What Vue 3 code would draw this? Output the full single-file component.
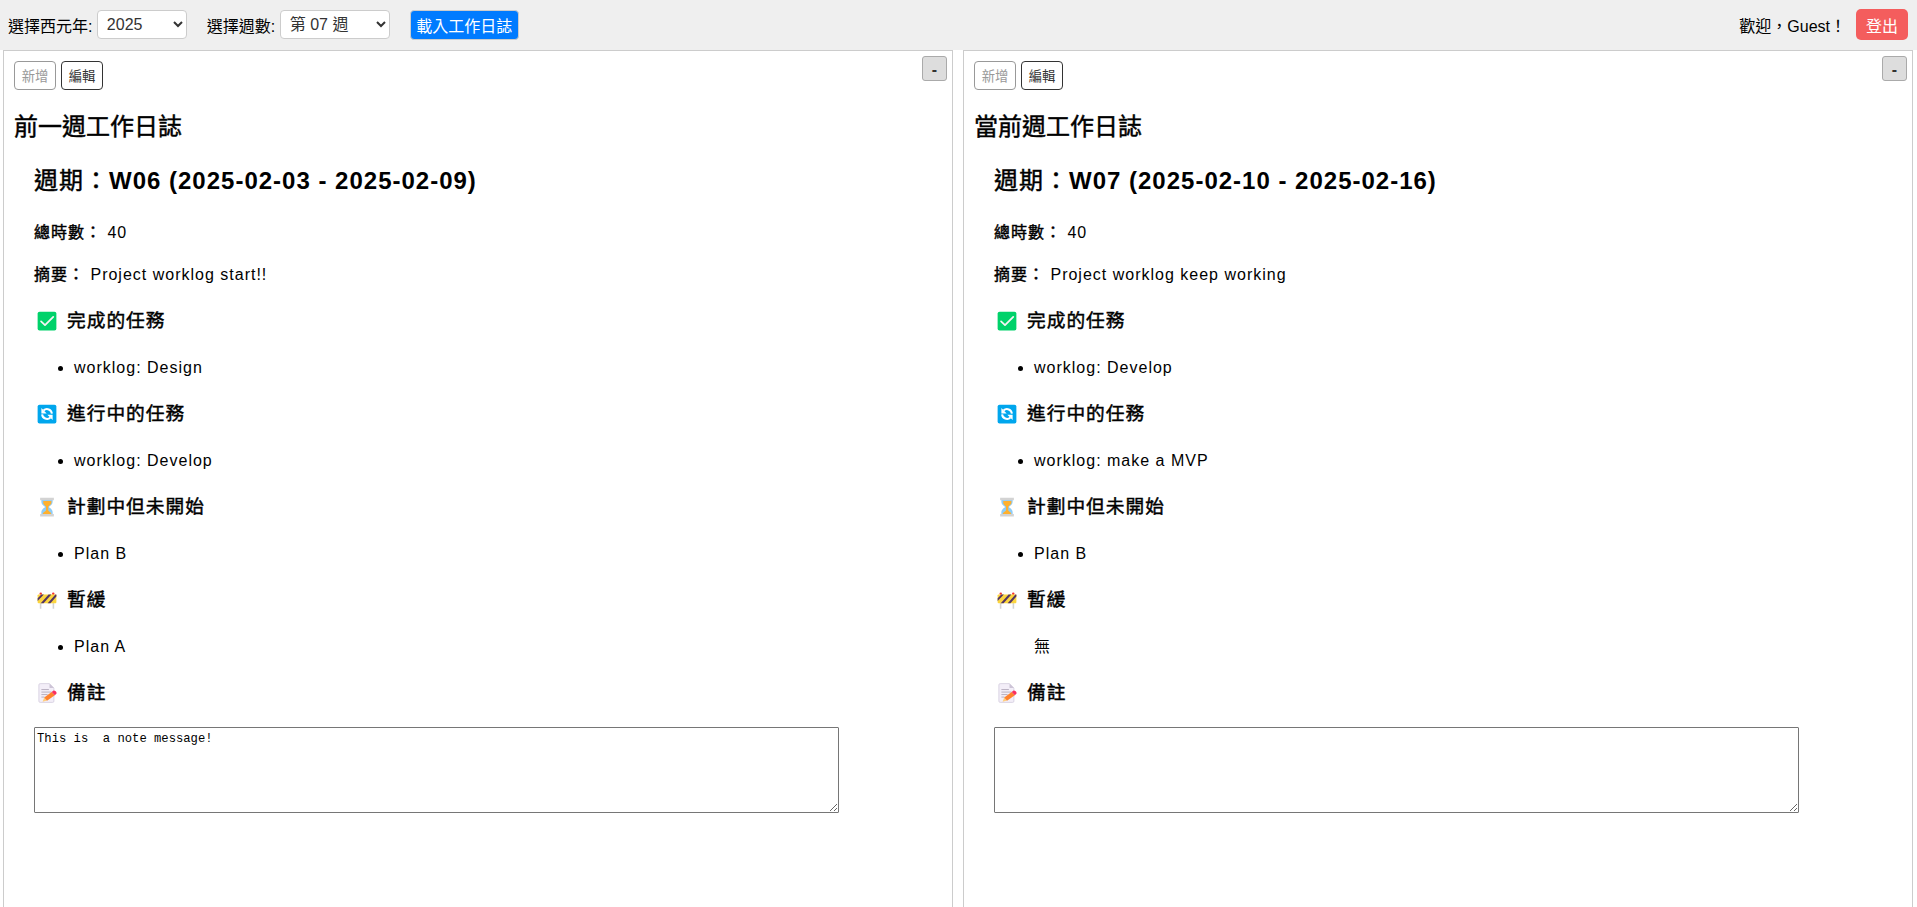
<script setup>
import { ref, reactive } from 'vue'

const year = ref('2025')
const week = ref('07')
const panels = reactive([
  {
    title: '前一週工作日誌',
    period: 'W06 (2025-02-03 - 2025-02-09)',
    hours: 40,
    summary: 'Project worklog start!!',
    sections: [
      { icon: 'done', name: '完成的任務', items: ['worklog: Design'] },
      { icon: 'progress', name: '進行中的任務', items: ['worklog: Develop'] },
      { icon: 'planned', name: '計劃中但未開始', items: ['Plan B'] },
      { icon: 'paused', name: '暫緩', items: ['Plan A'] }
    ],
    note: 'This is  a note message!'
  },
  {
    title: '當前週工作日誌',
    period: 'W07 (2025-02-10 - 2025-02-16)',
    hours: 40,
    summary: 'Project worklog keep working',
    sections: [
      { icon: 'done', name: '完成的任務', items: ['worklog: Develop'] },
      { icon: 'progress', name: '進行中的任務', items: ['worklog: make a MVP'] },
      { icon: 'planned', name: '計劃中但未開始', items: ['Plan B'] },
      { icon: 'paused', name: '暫緩', items: [] }
    ],
    note: ''
  }
])
</script>

<template>
  <div class="page">
    <header class="topbar">
      <div class="field">
        <label for="year">選擇西元年:</label>
        <select id="year" v-model="year" class="year">
          <option value="2025">2025</option>
        </select>
      </div>
      <div class="field">
        <label for="week">選擇週數:</label>
        <select id="week" v-model="week" class="week">
          <option value="07">第 07 週</option>
        </select>
      </div>
      <button class="load">載入工作日誌</button>
      <div class="user">
        <span>歡迎，Guest！</span>
        <button class="logout">登出</button>
      </div>
    </header>

    <main class="panels">
      <section v-for="panel in panels" :key="panel.title" class="panel">
        <button class="collapse">-</button>
        <div class="actions">
          <button class="action" disabled>新增</button>
          <button class="action">編輯</button>
        </div>
        <h2 class="title semi">{{ panel.title }}</h2>
        <div class="log">
          <h2><span class="semi">週期：</span>{{ panel.period }}</h2>
          <p><strong class="semi">總時數：</strong> {{ panel.hours }}</p>
          <p><strong class="semi">摘要：</strong> {{ panel.summary }}</p>
          <template v-for="s in panel.sections" :key="s.name">
            <h3 class="semi">
              <svg v-if="s.icon === 'done'" class="icon" viewBox="0 0 32 32">
                <rect x="1" y="1" width="30" height="30" rx="3" fill="#00d26a" />
                <path d="M6.5 16.5l6.3 6.2L26 9.5" fill="none" stroke="#f4f4f4" stroke-width="2.8" stroke-linecap="round" stroke-linejoin="round" />
              </svg>
              <svg v-else-if="s.icon === 'progress'" class="icon" viewBox="0 0 32 32">
                <rect x="1" y="1" width="30" height="30" rx="3" fill="#00a6ed" />
                <path d="M10.500 10.500A7.800 7.800 0 0 1 23.800 15.500M21.500 21.500A7.800 7.800 0 0 1 8.200 16.500" fill="none" stroke="#fff" stroke-width="3.200" />
                <path d="M7 6.500v8.500h8.500zM25 25.500v-8.500h-8.500z" fill="#fff" />
              </svg>
              <svg v-else-if="s.icon === 'planned'" class="icon" viewBox="0 0 32 32">
                <path d="M7 4h18v4c0 4-4 6-6 8 2 2 6 4 6 8v4H7v-4c0-4 4-6 6-8-2-2-6-4-6-8z" fill="#8ecdf8" />
                <path d="M10 6.500h13v3c0 2-4 4-5 6v6l4.500 4v2h-13v-2l5-4v-6c-1.500-2-4.500-4-4.500-6z" fill="#ffb02e" />
                <path d="M5 1h22v4H5zM5 27h22v4H5z" fill="#d3d3d3" />
              </svg>
              <svg v-else-if="s.icon === 'paused'" class="icon" viewBox="0 0 32 32">
                <path d="M4.500 8h2.500v22H4.500zM25 8h2.500v22H25z" fill="#d3d3d3" />
                <circle cx="6" cy="6" r="2" fill="#f8312f" />
                <circle cx="26" cy="6" r="2" fill="#f8312f" />
                <rect x="1" y="7" width="30" height="14" rx="1.500" fill="#fcd53f" />
                <path d="M1 13l6-6h4L1 17.500zM6 21L18.500 7h4.500L10.500 21zM17 21L29.500 7H31v3.500L21.500 21z" fill="#533566" />
              </svg>
              {{ s.name }}
            </h3>
            <ul>
              <li v-for="item in s.items" :key="item">{{ item }}</li>
              <li v-if="!s.items.length" class="empty">無</li>
            </ul>
          </template>
          <h3 class="semi">
            <svg class="icon" viewBox="0 0 32 32">
              <path d="M5 1h15l7 7v21a2 2 0 0 1-2 2H5a2 2 0 0 1-2-2V3a2 2 0 0 1 2-2z" fill="#f3eef8" stroke="#d9d2e2" stroke-width="1.500" />
              <path d="M20 1v7h7z" fill="#cdc4d6" />
              <path d="M7 10.500h12M7 14.500h16M7 18.500h10M7 22.500h5" stroke="#b4acbc" stroke-width="1.500" />
              <path d="M9 30l2.500-7 4.500 5z" fill="#ffce7c" />
              <path d="M11.500 23L23.500 14.500l5 5L16 28.500z" fill="#ff822d" />
              <path d="M23.500 14.500l2.500-2c2-1.500 6.500 2.500 5 4.500l-2.500 2.500z" fill="#f92f60" />
            </svg>
            備註
          </h3>
          <textarea v-model="panel.note" spellcheck="false"></textarea>
        </div>
      </section>
    </main>
  </div>
</template>

<style>
body {
  margin: 0;
  background: #fff;
}
</style>

<style scoped>
.page {
  height: 907px;
  overflow: hidden;
  display: flex;
  flex-direction: column;
  color: #000;
  font: 16px "Liberation Sans", "Noto Sans CJK TC", sans-serif;
}
button,
select {
  box-sizing: border-box;
  font-family: inherit;
  margin: 0;
}
/* Chinese headings: a weight between regular and bold */
.semi {
  font-weight: 400;
  -webkit-text-stroke: 0.45px #000;
}
.topbar {
  flex: none;
  height: 50px;
  box-sizing: border-box;
  padding: 0 9px 1px 8px;
  display: flex;
  align-items: center;
  gap: 20px;
  background: #efefef;
}
.field {
  display: flex;
  align-items: center;
  gap: 4.4px;
}
select {
  height: 29px;
  padding: 0 5px;
  border: 1px solid #ccc;
  border-radius: 4px;
  background: #fff;
  color: #333;
  font-size: 16px;
}
.year {
  width: 90px;
}
.week {
  width: 110px;
}
.load {
  width: 109px;
  height: 30px;
  padding: 0;
  border: 1px solid #ccc;
  border-radius: 4px;
  background: #007bff;
  color: #fff;
  font-size: 16px;
  white-space: nowrap;
}
.user {
  margin-left: auto;
  display: flex;
  align-items: center;
  gap: 10px;
}
.logout {
  width: 52px;
  height: 31px;
  padding: 0;
  border: 0;
  border-radius: 5px;
  background: #f45d5d;
  color: #fff;
  font-size: 16px;
}
.panels {
  flex: 1;
  min-height: 0;
  display: grid;
  grid-template-columns: 950px 950px;
  gap: 10px;
  padding-left: 3px;
}
.panel {
  position: relative;
  box-sizing: border-box;
  height: 900px;
  padding: 10px;
  border: 1px solid #ccc;
}
.collapse {
  position: absolute;
  top: 5px;
  right: 5px;
  width: 25px;
  height: 25px;
  padding: 3px 0 0;
  border: 1px solid #aaa;
  border-radius: 3px;
  background: #ddd;
  color: #333;
  font-size: 16px;
  font-weight: bold;
}
.actions {
  display: flex;
  gap: 5px;
}
.action {
  width: 42px;
  height: 29px;
  padding: 0;
  border: 1px solid #333;
  border-radius: 4px;
  background: #fff;
  color: #333;
  font-size: 13.333px;
}
.action:disabled {
  border-color: #999;
  color: #999;
}
.title {
  margin: 21px 0 0;
  font-size: 24px;
  line-height: 32px;
}
.log {
  padding: 0 20px;
  margin-top: 19px;
  letter-spacing: 1px;
  line-height: 1.6;
}
.log h2 {
  margin: 0 0 19.92px;
  font-size: 24px;
}
p {
  margin: 16px 0;
}
h3 {
  display: flex;
  align-items: center;
  margin: 18.72px 0;
  font-size: 18.72px;
}
.icon {
  width: 20px;
  height: 20px;
  margin: 0 10px 0 3px;
}
ul {
  margin: 0;
  padding-left: 40px;
}
.empty {
  list-style: none;
}
textarea {
  display: block;
  box-sizing: border-box;
  width: 805px;
  height: 86px;
  margin: 0;
  padding: 4px 2px 2px;
  border: 1px solid #767676;
  border-radius: 1px;
  color: #000;
  font: 12.2px/15px "Liberation Mono", monospace;
  letter-spacing: normal;
}
</style>
